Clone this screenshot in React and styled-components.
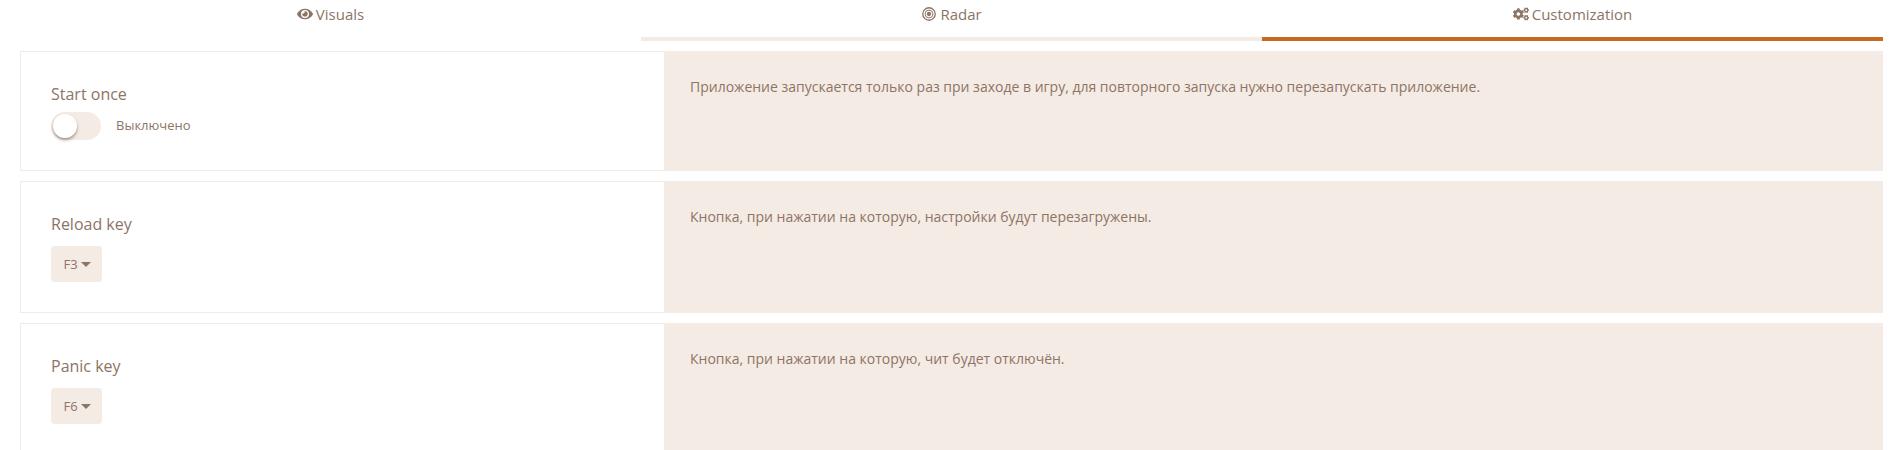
import React from "react";
import styled, { createGlobalStyle } from "styled-components";
import { FaEye, FaCogs } from "react-icons/fa";

const GlobalStyle = createGlobalStyle`
  html, body {
    margin: 0;
    background: #fff;
    height: 450px;
    overflow: hidden;
  }
  * {
    box-sizing: border-box;
  }
`;

const Page = styled.div`
  padding: 0 18px 0 20px;
  font-family: "Open Sans", "Liberation Sans", sans-serif;
  color: #8c7466;
`;

const Tabs = styled.div`
  display: grid;
  grid-template-columns: repeat(3, 1fr);
  height: 41px;
  margin-bottom: 10px;
`;

const Tab = styled.div`
  display: flex;
  align-items: flex-start;
  justify-content: center;
  gap: 3px;
  padding-top: 3px;
  font-size: 15px;
  line-height: 22px;
  border-bottom: 4px solid ${(p) => p.$line};
  svg {
    width: 16px;
    height: 16px;
    margin-top: 3px;
  }
`;

const Card = styled.div`
  display: flex;
  height: ${(p) => p.$height}px;
  margin-bottom: 10px;
`;

const Left = styled.div`
  width: 644px;
  flex-shrink: 0;
  padding: 31px 0 0 30px;
  border: 1px solid #f0ebe7;
  border-right: 0;
`;

const Label = styled.div`
  font-size: 16px;
  line-height: 22px;
`;

const Help = styled.div`
  flex: 1;
  background: #f5ebe5;
  padding: 25px 26px;
  font-size: 14px;
  line-height: 21px;
`;

const SwitchRow = styled.div`
  display: flex;
  align-items: center;
  gap: 15px;
  margin-top: 7px;
  font-size: 13px;
`;

const StateText = styled.span`
  padding-bottom: 2px;
`;

const Switch = styled.div`
  position: relative;
  width: 50px;
  height: 28px;
  border-radius: 14px;
  background: #f5ebe5;
`;

const Knob = styled.div`
  position: absolute;
  left: 2px;
  top: 2px;
  width: 24px;
  height: 24px;
  border-radius: 50%;
  background: #fff;
  box-shadow: 0 2px 3px rgba(90, 60, 45, 0.5);
`;

const KeyButton = styled.div`
  display: flex;
  align-items: center;
  justify-content: center;
  gap: 3px;
  width: 51px;
  height: 36px;
  margin-top: 11px;
  padding-left: 1px;
  border-radius: 4px;
  background: #f5ebe5;
  font-size: 13px;
`;

const Caret = styled.span`
  width: 0;
  height: 0;
  border-top: 5px solid #8c7466;
  border-left: 5px solid transparent;
  border-right: 5px solid transparent;
`;

const RadarIcon = () => (
  <svg viewBox="0 0 18 18" fill="none" stroke="currentColor">
    <circle cx="9" cy="9" r="7" strokeWidth="1.5" />
    <circle cx="9" cy="9" r="4.4" strokeWidth="1.1" />
    <circle cx="9" cy="9" r="2.4" fill="currentColor" stroke="none" />
  </svg>
);

export default function App() {
  return (
    <Page>
      <GlobalStyle />
      <Tabs>
        <Tab $line="transparent"><FaEye />Visuals</Tab>
        <Tab $line="#f5ebe5"><RadarIcon />Radar</Tab>
        <Tab $line="#c8691f"><FaCogs />Customization</Tab>
      </Tabs>
      <Card $height={120}>
        <Left>
          <Label>Start once</Label>
          <SwitchRow>
            <Switch><Knob /></Switch>
            <StateText>Выключено</StateText>
          </SwitchRow>
        </Left>
        <Help>Приложение запускается только раз при заходе в игру, для повторного запуска нужно перезапускать приложение.</Help>
      </Card>
      <Card $height={132}>
        <Left>
          <Label>Reload key</Label>
          <KeyButton>F3<Caret /></KeyButton>
        </Left>
        <Help>Кнопка, при нажатии на которую, настройки будут перезагружены.</Help>
      </Card>
      <Card $height={132}>
        <Left>
          <Label>Panic key</Label>
          <KeyButton>F6<Caret /></KeyButton>
        </Left>
        <Help>Кнопка, при нажатии на которую, чит будет отключён.</Help>
      </Card>
    </Page>
  );
}
